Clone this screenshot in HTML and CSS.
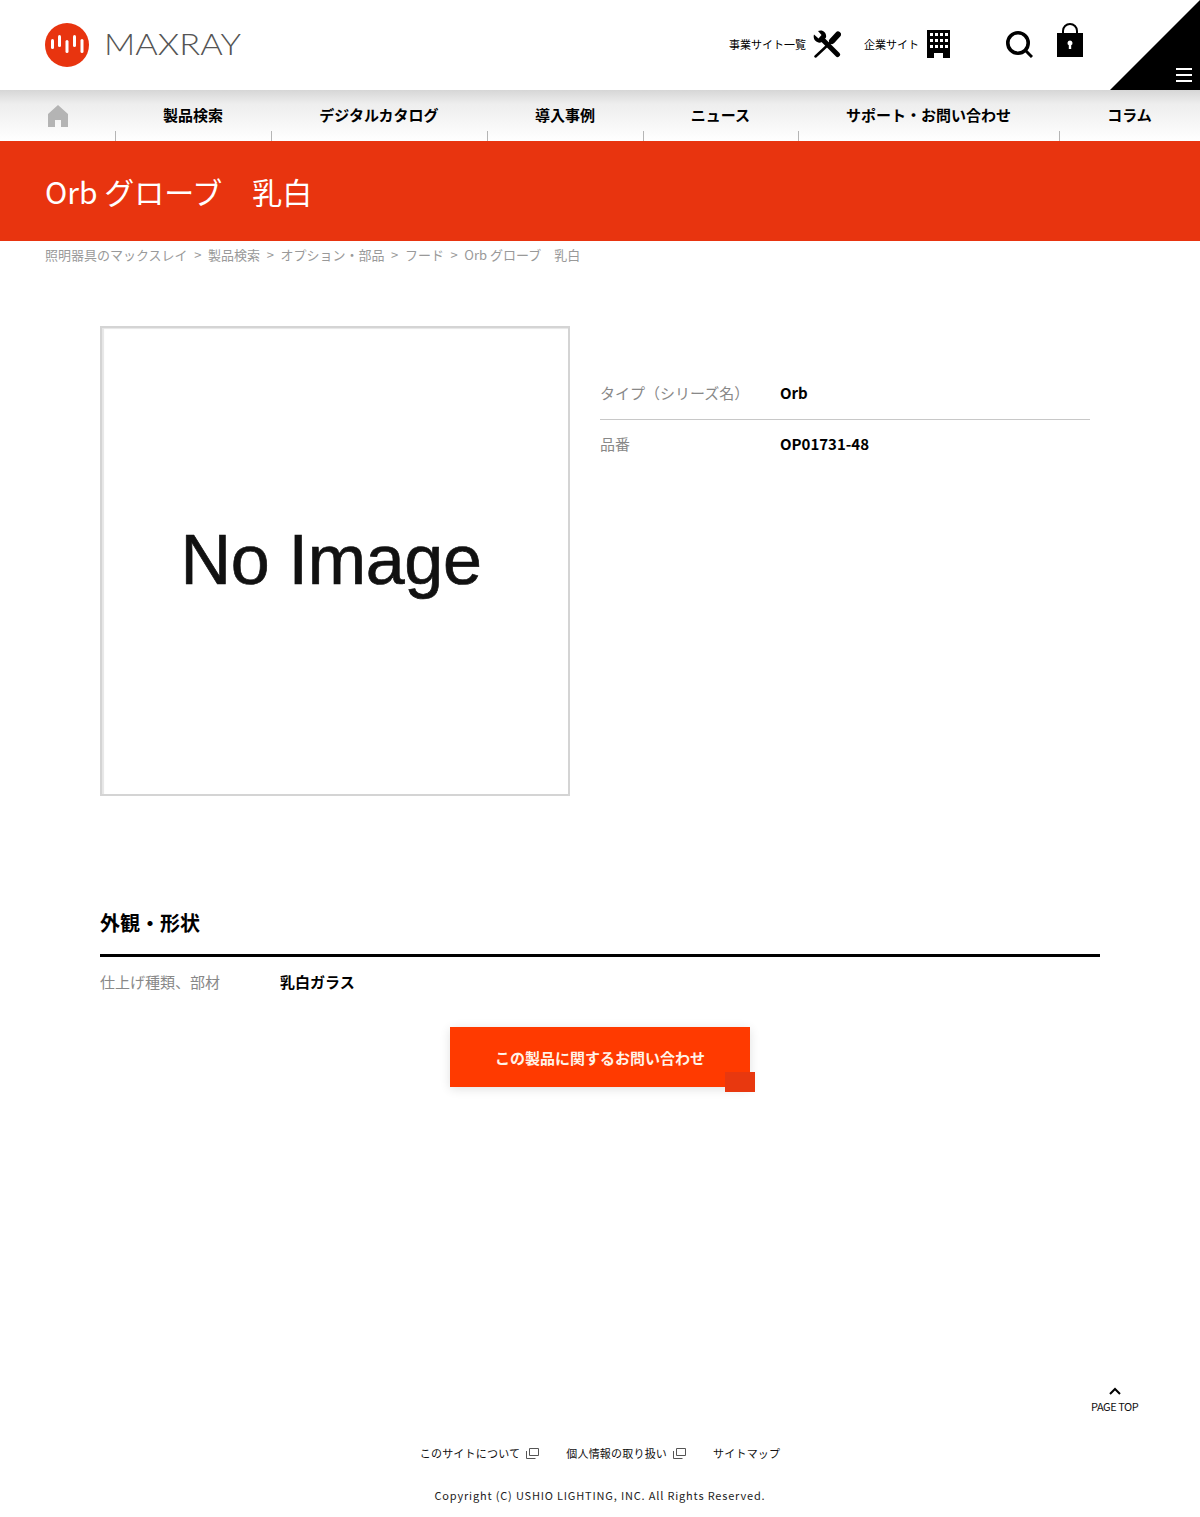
FILE: index.html
```html
<!DOCTYPE html>
<html lang="ja">
<head>
<meta charset="utf-8">
<title>Orb グローブ 乳白</title>
<link rel="stylesheet" href="styles.css">
</head>
<body>
<header class="site-header">
  <a class="logo">
    <svg class="logo-mark" viewBox="0 0 44 44" width="44" height="44">
      <circle cx="22" cy="22" r="22" fill="#e8340f"/>
      <g stroke="#fff" stroke-width="3" stroke-linecap="round" fill="none">
        <path d="M7.500 17.500v7"/><path d="M14.500 13.500v9"/><path d="M22 18.500v10"/><path d="M29.500 13.500v9"/><path d="M37 17.500v11"/>
      </g>
    </svg>
    <svg class="logo-word" viewBox="0 0 138 40" width="138" height="40">
      <text class="logo-text" x="0" y="30" textLength="137" lengthAdjust="spacingAndGlyphs">MAXRAY</text>
    </svg>
  </a>
  <div class="utils">
    <a class="util util-biz">事業サイト一覧
      <svg viewBox="0 0 28 28" width="28" height="28">
        <path d="M5 1 8.500 5 5.500 8.500 1 4.500C-.5 9.500 3.500 13.500 8 12.500L13 7.500C14 3 10-1 5 1Z" fill="#000"/>
        <path d="M10 10 24.500 24.500" stroke="#000" stroke-width="5" stroke-linecap="round"/>
        <path d="M25 4.500 19 11" stroke="#000" stroke-width="6" stroke-linecap="round"/>
        <path d="M17 13 2.500 26.500" stroke="#000" stroke-width="2.500" stroke-linecap="round"/>
      </svg>
    </a>
    <a class="util util-corp">企業サイト
      <svg viewBox="0 0 23 28" width="23" height="28"><path fill-rule="evenodd" fill="#000" d="M0 0h23v28h-7v-5H7v5H0zM3 3v3h3V3zm5 0v3h3V3zm5 0v3h3V3zm5 0v3h3V3zM3 9v3h3V9zm5 0v3h3V9zm5 0v3h3V9zm5 0v3h3V9zM3 15v3h3v-3zm5 0v3h3v-3zm5 0v3h3v-3zm5 0v3h3v-3z"/></svg>
    </a>
    <a class="util-search">
      <svg viewBox="0 0 27 27" width="27" height="27"><circle cx="12" cy="12" r="10.200" fill="none" stroke="#000" stroke-width="3.600"/><path d="M19.500 19.500 26 26" stroke="#000" stroke-width="3" fill="none"/></svg>
    </a>
    <a class="util-lock">
      <svg viewBox="0 0 26 34" width="26" height="34"><path d="M6 15V8a7 7 0 0 1 14 0v7" fill="none" stroke="#000" stroke-width="2"/><path fill-rule="evenodd" fill="#000" d="M0 10h26v24H0zM13 17.500a2.500 2.500 0 0 0-1.200 4.700V26h2.400v-3.800A2.500 2.500 0 0 0 13 17.500z"/></svg>
    </a>
  </div>
  <button class="menu-corner" aria-label="メニュー"><span></span><span></span><span></span></button>
</header>

<nav class="gnav">
  <a class="gnav-home">
    <svg viewBox="0 0 20 22" width="20" height="22"><path fill="#b4b4b4" fill-rule="evenodd" d="M10 0 20 9v13h-7v-7H7v7H0V9z"/></svg>
  </a>
  <a class="gnav-item">製品検索</a>
  <a class="gnav-item">デジタルカタログ</a>
  <a class="gnav-item">導入事例</a>
  <a class="gnav-item">ニュース</a>
  <a class="gnav-item">サポート・お問い合わせ</a>
  <a class="gnav-item">コラム</a>
</nav>

<section class="page-title"><h1>Orb グローブ　乳白</h1></section>

<ol class="crumbs">
  <li>照明器具のマックスレイ</li>
  <li>製品検索</li>
  <li>オプション・部品</li>
  <li>フード</li>
  <li>Orb グローブ　乳白</li>
</ol>

<main class="content">
  <div class="product">
    <div class="no-image"><span>No Image</span></div>
    <dl class="spec">
      <div class="spec-row spec-row-line"><dt>タイプ（シリーズ名）</dt><dd>Orb</dd></div>
      <div class="spec-row"><dt>品番</dt><dd>OP01731-48</dd></div>
    </dl>
  </div>

  <h2 class="section-title">外観・形状</h2>
  <dl class="attr">
    <dt>仕上げ種類、部材</dt><dd>乳白ガラス</dd>
  </dl>

  <div class="cta-wrap"><a class="cta">この製品に関するお問い合わせ</a></div>
</main>

<footer class="site-footer">
  <a class="page-top">
    <svg viewBox="0 0 12 8" width="12" height="8"><path d="M1 7l5-5 5 5" fill="none" stroke="#000" stroke-width="2"/></svg>
    <span>PAGE TOP</span>
  </a>
  <ul class="foot-links">
    <li>このサイトについて<svg viewBox="0 0 13 11" width="13" height="11"><path d="M3.500.5h9v7h-9zM.5 3v7.500h9" fill="none" stroke="#555"/></svg></li>
    <li>個人情報の取り扱い<svg viewBox="0 0 13 11" width="13" height="11"><path d="M3.500.5h9v7h-9zM.5 3v7.500h9" fill="none" stroke="#555"/></svg></li>
    <li>サイトマップ</li>
  </ul>
  <p class="copyright">Copyright (C) USHIO LIGHTING, INC. All Rights Reserved.</p>
</footer>
</body>
</html>
```
FILE: styles.css
```css
* { box-sizing: border-box; }
html, body { margin: 0; padding: 0; }
body {
  font-family: "Noto Sans CJK JP", "Noto Sans", sans-serif;
  color: #000;
  background: #fff;
  height: 1517px;
  overflow: hidden;
}
a { color: inherit; text-decoration: none; }
h1, h2, p, dl, dd, dt, ol, ul { margin: 0; padding: 0; }
ol, ul { list-style: none; }

/* header */
.site-header {
  height: 90px;
  display: flex;
  align-items: center;
  padding-left: 45px;
  position: relative;
}
.logo { display: flex; align-items: center; gap: 15px; }
.logo-mark, .logo-word { display: block; }
.logo-text {
  font-family: "Lato", sans-serif;
  font-weight: 300;
  font-size: 29px;
  fill: #555;
}
.utils { display: flex; align-items: center; margin-left: 487px; padding-bottom: 2px; }
.util {
  display: flex;
  align-items: center;
  font-size: 11px;
  line-height: 16px;
  white-space: nowrap;
}
.util svg, .util-search svg, .util-lock svg { display: block; }
.util-biz { gap: 7px; }
.util-corp { gap: 8px; margin-left: 23px; }
.util-search { margin-left: 56px; margin-top: 1px; }
.util-lock { margin-left: 24px; margin-top: -9px; }
.menu-corner {
  position: absolute;
  right: 0;
  top: 0;
  width: 90px;
  height: 90px;
  border: 0;
  padding: 68px 8px 0 66px;
  background: #000;
  clip-path: polygon(100% 0, 100% 100%, 0 100%);
  display: flex;
  flex-direction: column;
  gap: 4px;
}
.menu-corner span { display: block; height: 2px; width: 16px; background: #fff; flex: none; }

/* global nav */
.gnav {
  height: 51px;
  display: grid;
  grid-template-columns: 115px 156px 216px 156px 155px 261px 141px;
  background: linear-gradient(#d6d6d6 0, #eeeeee 14px, #f4f4f4 28px, #ffffff 100%);
}
.gnav-home { padding: 15px 0 0 48px; display: block; }
.gnav-home svg { display: block; }
.gnav-item {
  padding-top: 14px;
  text-align: center;
  font-size: 15px;
  line-height: 22px;
  font-weight: 700;
  white-space: nowrap;
  position: relative;
}
.gnav-item::before {
  content: "";
  position: absolute;
  left: 0;
  bottom: 0;
  width: 1px;
  height: 10px;
  background: #b5b5b5;
}

/* title */
.page-title {
  height: 100px;
  background: #e8340f;
  display: flex;
  align-items: center;
  padding: 0 45px;
}
.page-title h1 {
  font-size: 30px;
  line-height: 44px;
  font-weight: 400;
  color: #fff;
}

/* breadcrumb */
.crumbs {
  display: flex;
  padding: 4px 45px 0;
  font-size: 13px;
  line-height: 20px;
  color: #999;
  height: 25px;
}
.crumbs li + li::before { content: ">"; margin: 0 6.600px; }

/* content */
.content { padding: 60px 100px 0; }
.product { display: flex; align-items: flex-start; gap: 30px; padding-bottom: 106px; }
.no-image {
  width: 470px;
  height: 470px;
  flex: none;
  border: 2px solid #d4d4d4;
  box-shadow: inset 2px 1px 1px #e6e6e6;
  display: flex;
  align-items: center;
  justify-content: center;
  padding: 0 8px 2px 0;
}
.no-image span {
  font-family: "Liberation Sans", Arial, sans-serif;
  font-size: 70px;
  line-height: 80px;
  color: #111;
  -webkit-text-stroke: .7px #111;
  filter: blur(.7px);
  letter-spacing: -.3px;
}
.spec { width: 490px; padding-top: 42px; }
.spec-row {
  display: flex;
  align-items: center;
  height: 50px;
  padding-bottom: 2px;
  font-size: 15px;
  line-height: 24px;
}
.spec-row-line { height: 52px; border-bottom: 1px solid #c8c8c8; }
.spec dt, .attr dt { color: #888; font-weight: 400; }
.spec dt { width: 180px; }
.spec dd, .attr dd { font-weight: 700; }

.section-title {
  font-size: 20px;
  line-height: 30px;
  font-weight: 700;
  padding-top: 6px;
  box-sizing: content-box;
  height: 46px;
  border-bottom: 3px solid #000;
}
.attr {
  display: flex;
  align-items: center;
  height: 50px;
  font-size: 15px;
  line-height: 24px;
}
.attr dt { width: 180px; }
.cta-wrap { display: flex; justify-content: center; padding-top: 20px; }
.cta {
  width: 300px;
  height: 60px;
  background: #ff3a00;
  color: #fff3e8;
  font-size: 15px;
  font-weight: 700;
  display: flex;
  align-items: center;
  justify-content: center;
  position: relative;
  box-shadow: 0 2px 10px rgba(0,0,0,.12);
}
.cta::after {
  content: "";
  position: absolute;
  right: -5px;
  bottom: -5px;
  width: 30px;
  height: 20px;
  background: #e8380f;
}

/* footer */
.site-footer { display: flex; flex-direction: column; align-items: center; padding-top: 300px; }
.page-top {
  align-self: flex-end;
  margin-right: 62px;
  display: flex;
  flex-direction: column;
  align-items: center;
  font-size: 11px;
  line-height: 16px;
  gap: 3px;
  color: #111;
}
.page-top svg { display: block; }
.page-top span { width: 47px; white-space: nowrap; letter-spacing: -.45px; }
.foot-links {
  display: flex;
  gap: 27px;
  font-size: 11px;
  line-height: 16px;
  letter-spacing: .2px;
  margin-top: 31px;
  color: #111;
}
.foot-links li { display: flex; align-items: center; gap: 6px; white-space: nowrap; }
.foot-links svg { display: block; }
.copyright { font-size: 11px; line-height: 16px; letter-spacing: .82px; margin-top: 26px; color: #222; }
```
